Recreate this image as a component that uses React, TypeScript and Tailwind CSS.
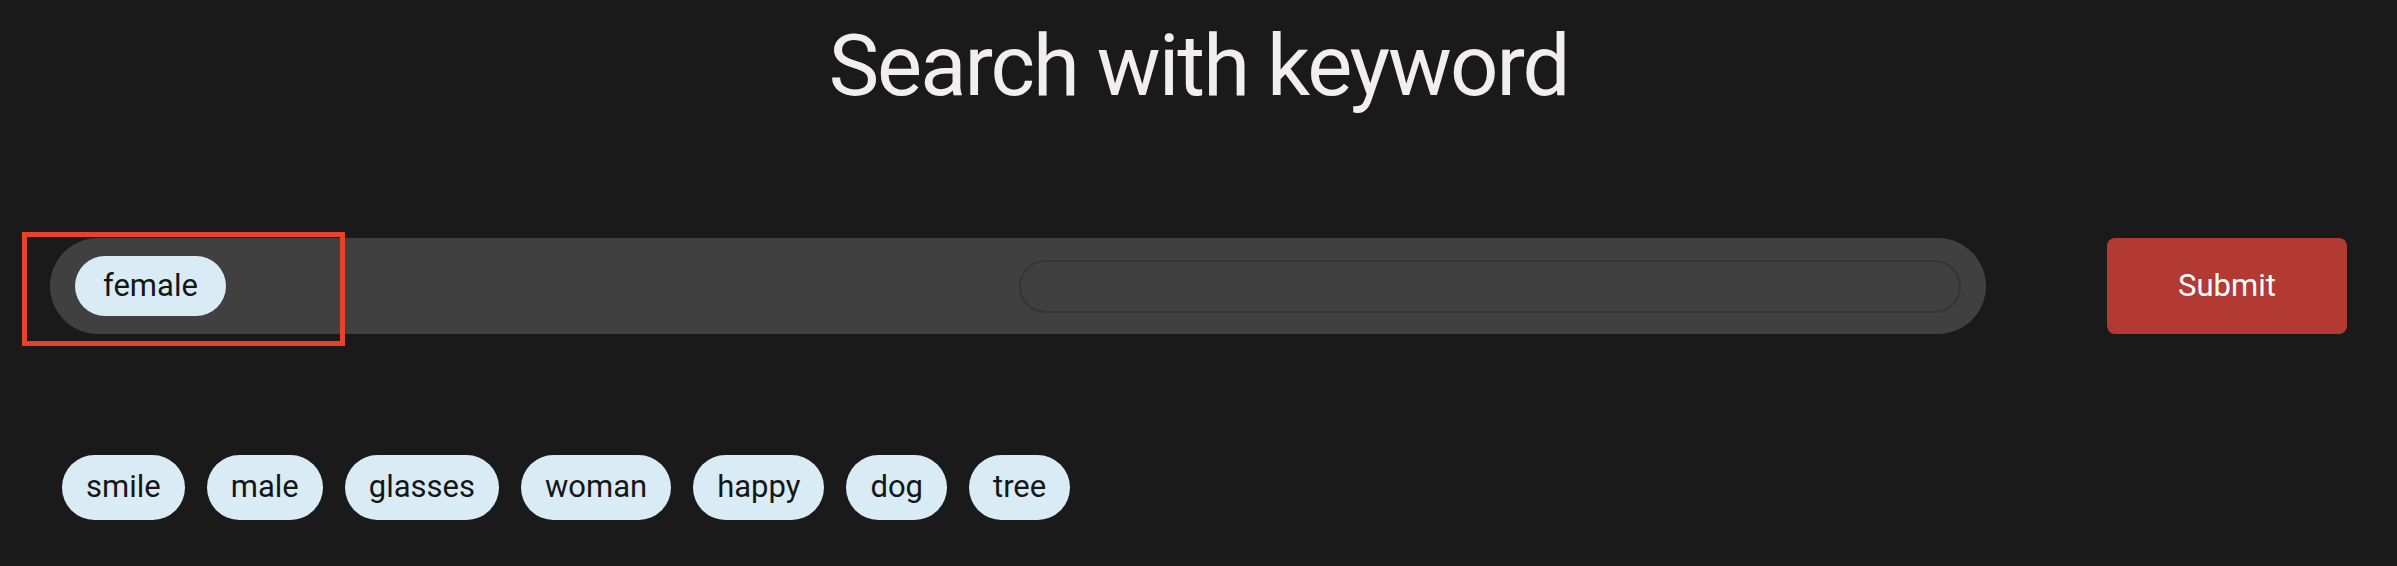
import React, { useState } from 'react';

const suggestions = ['smile', 'male', 'glasses', 'woman', 'happy', 'dog', 'tree'];

const font = { fontFamily: 'Roboto, "Noto Sans", sans-serif' };

const App: React.FC = () => {
    const [selected, setSelected] = useState<string[]>(['female']);
    const [query, setQuery] = useState('');

    const addKeyword = (word: string) => {
        if (!selected.includes(word)) setSelected([...selected, word]);
    };

    return (
        <div className="min-h-screen w-full bg-[#1a1a1a] px-[50px] pb-10" style={font}>
            <h1 className="pt-[23px] text-center text-[85px] font-normal leading-[86px] tracking-[-2px] text-[#f0eeee]">
                Search with keyword
            </h1>

            <div className="mt-[129px] flex items-center justify-between">
                <div className="relative flex h-[96px] w-[1936px] items-center rounded-full bg-[#404040] px-[25px]">
                    {/* highlight around the selected keyword */}
                    <div className="pointer-events-none absolute left-[-28px] top-[-6px] h-[114px] w-[323px] border-[5px] border-[#e8432a]" />
                    <div className="flex min-w-0 flex-1 items-center gap-[23px]">
                        {selected.map(word => (
                            <span
                                key={word}
                                onClick={() => setSelected(selected.filter(w => w !== word))}
                                className="flex h-[60px] cursor-pointer items-center rounded-full bg-[#d9ebf5] px-[28px] text-[31px] text-[#161616]"
                            >
                                {word}
                            </span>
                        ))}
                    </div>
                    <input
                        value={query}
                        onChange={e => setQuery(e.target.value)}
                        className="h-[53px] w-[942px] shrink-0 rounded-full border-2 border-[#353535] bg-[#404040] px-6 text-[28px] text-white outline-none"
                    />
                </div>
                <button className="h-[96px] w-[240px] rounded-[8px] bg-[#b33a33] text-[31px] text-white">
                    Submit
                </button>
            </div>

            <div className="mt-[121px] flex items-center gap-[22px] pl-[12px]">
                {suggestions.map(word => (
                    <span
                        key={word}
                        onClick={() => addKeyword(word)}
                        className="flex h-[65px] cursor-pointer items-center rounded-full bg-[#d9ebf5] px-[24px] text-[31px] text-[#161616]"
                    >
                        {word}
                    </span>
                ))}
            </div>
        </div>
    );
};

export default App;
